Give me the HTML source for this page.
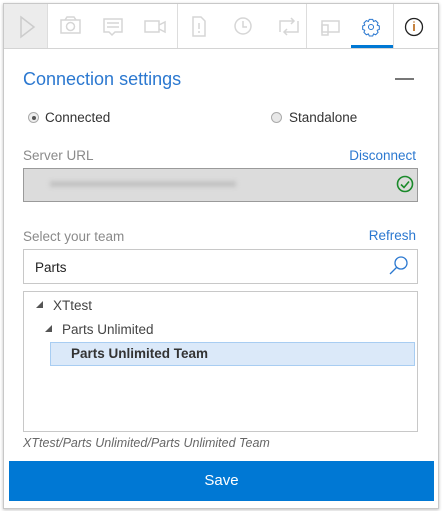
<!DOCTYPE html><html><head><style>
body{margin:0;width:442px;height:511px;background:#fff;font-family:"Segoe UI","Liberation Sans",sans-serif;position:relative;overflow:hidden}
.a{position:absolute}
.frame{left:3px;top:3px;width:434px;height:504px;border:1px solid #c8c8c8;box-shadow:0 1px 3px rgba(0,0,0,.25)}
.t{font-size:13.5px;color:#333;white-space:nowrap}
.g{color:#8a8a8a}
.b{color:#2b78d0}
.sep{width:1px;background:#ddd;top:4px;height:44px}
</style></head><body>
<div class="a frame"></div>
<div class="a" style="left:4px;top:4px;width:43px;height:44px;background:#ececec"></div>
<div class="a" style="left:4px;top:48px;width:434px;height:1px;background:#d4d4d4"></div>
<div class="a sep" style="left:47px"></div><div class="a sep" style="left:177px"></div><div class="a sep" style="left:306px"></div><div class="a sep" style="left:393px"></div>
<div class="a" style="left:351px;top:45px;width:42px;height:3px;background:#0078d4"></div>
<svg class="a" style="left:0;top:0" width="442" height="50" fill="none" stroke-width="1.5">
<path d="M21 17 L34 27 L21 37 Z" stroke="#ccc"/>
<g stroke="#d6d6d6"><rect x="61" y="20" width="19" height="13"/><circle cx="70.5" cy="26.5" r="4"/><path d="M65 20 l2-3 h7 l2 3"/>
<path d="M104 19 h18 v13 h-7 l-3 3 l-3-3 h-5 z M107 23 h12 M107 27 h12"/>
<rect x="145" y="21" width="14" height="11"/><path d="M159 25 l6-3 v10 l-6-3"/>
<path d="M193 17 h8 l4 4 v15 h-12 z M199 23 v6 M199 31 v2"/>
<circle cx="243" cy="26" r="8"/><path d="M243 21 v6 h4"/>
<path d="M280 32 v-11 h14 M291 18 l3 3 l-3 3 M298 21 v11 h-14 M287 35 l-3-3 l3-3"/>
<rect x="322" y="21" width="17" height="11"/><rect x="322" y="25" width="6" height="10"/></g>
<g stroke="#2b78d0" stroke-width="1.2" transform="translate(371 27) scale(0.85) translate(-371 -27)"><circle cx="371" cy="27" r="3"/><path d="M369 18 h4 l1 2.5 l2.5-1 l2.8 2.8 l-1 2.5 l2.5 1 v4 l-2.5 1 l1 2.5 l-2.8 2.8 l-2.5-1 l-1 2.5 h-4 l-1-2.5 l-2.5 1 l-2.8-2.8 l1-2.5 l-2.5-1 v-4 l2.5-1 l-1-2.5 l2.8-2.8 l2.5 1 z"/></g>
<circle cx="414" cy="27" r="8.5" stroke="#222" stroke-width="1.3"/><path d="M414 24 v7 M414 21.5 v1" stroke="#b35a00" stroke-width="1.5"/>
</svg>
<div class="a b" style="left:23px;top:69px;font-size:18px">Connection settings</div>
<div class="a" style="left:395px;top:78px;width:19px;height:2px;background:#777"></div>
<div class="a" style="left:28px;top:112px;width:9px;height:9px;border-radius:50%;border:1px solid #aaa;background:#eee"></div>
<div class="a" style="left:31.5px;top:115.5px;width:4px;height:4px;border-radius:50%;background:#555"></div>
<div class="a t" style="left:45px;top:110px">Connected</div>
<div class="a" style="left:271px;top:112px;width:9px;height:9px;border-radius:50%;border:1px solid #aaa;background:#e8e8e8"></div>
<div class="a t" style="left:289px;top:110px">Standalone</div>
<div class="a t g" style="left:23px;top:148px">Server URL</div>
<div class="a t b" style="right:26px;top:148px">Disconnect</div>
<div class="a" style="left:23px;top:168px;width:393px;height:32px;background:#dcdcdc;border:1px solid #9a9a9a"></div>
<div class="a" style="left:50px;top:181px;width:186px;height:6px;background:#c2c2c2;filter:blur(2px)"></div>
<svg class="a" style="left:396px;top:175px" width="18" height="18" fill="none" stroke="#1a8a2a" stroke-width="1.6"><circle cx="9" cy="9" r="7.5"/><path d="M5 9.5 l3 3 l5-6"/></svg>
<div class="a t g" style="left:23px;top:229px">Select your team</div>
<div class="a t b" style="right:26px;top:228px">Refresh</div>
<div class="a" style="left:23px;top:249px;width:393px;height:33px;border:1px solid #c8c8c8"></div>
<div class="a t" style="left:35px;top:260px;color:#222">Parts</div>
<svg class="a" style="left:388px;top:255px" width="22" height="22" fill="none" stroke="#2b78d0" stroke-width="1.3"><circle cx="13" cy="8" r="6"/><path d="M9 12 L2 19"/></svg>
<div class="a" style="left:23px;top:291px;width:393px;height:139px;border:1px solid #c8c8c8"></div>
<div class="a" style="left:36px;top:301px;width:0;height:0;border-left:7px solid transparent;border-bottom:7px solid #555"></div>
<div class="a t" style="left:53px;top:298px;color:#444">XTtest</div>
<div class="a" style="left:45px;top:325px;width:0;height:0;border-left:7px solid transparent;border-bottom:7px solid #555"></div>
<div class="a t" style="left:62px;top:322px;color:#444">Parts Unlimited</div>
<div class="a" style="left:50px;top:342px;width:363px;height:22px;background:#dbe9f9;border:1px solid #a8cdf2"></div>
<div class="a t" style="left:71px;top:346px;font-weight:bold;color:#333">Parts Unlimited Team</div>
<div class="a" style="left:23px;top:436px;font-size:12.5px;font-style:italic;color:#666;white-space:nowrap">XTtest/Parts Unlimited/Parts Unlimited Team</div>
<div class="a" style="left:9px;top:461px;width:425px;height:40px;background:#0078d4;color:#fff;font-size:15px;text-align:center;line-height:40px">Save</div>
</body></html>
